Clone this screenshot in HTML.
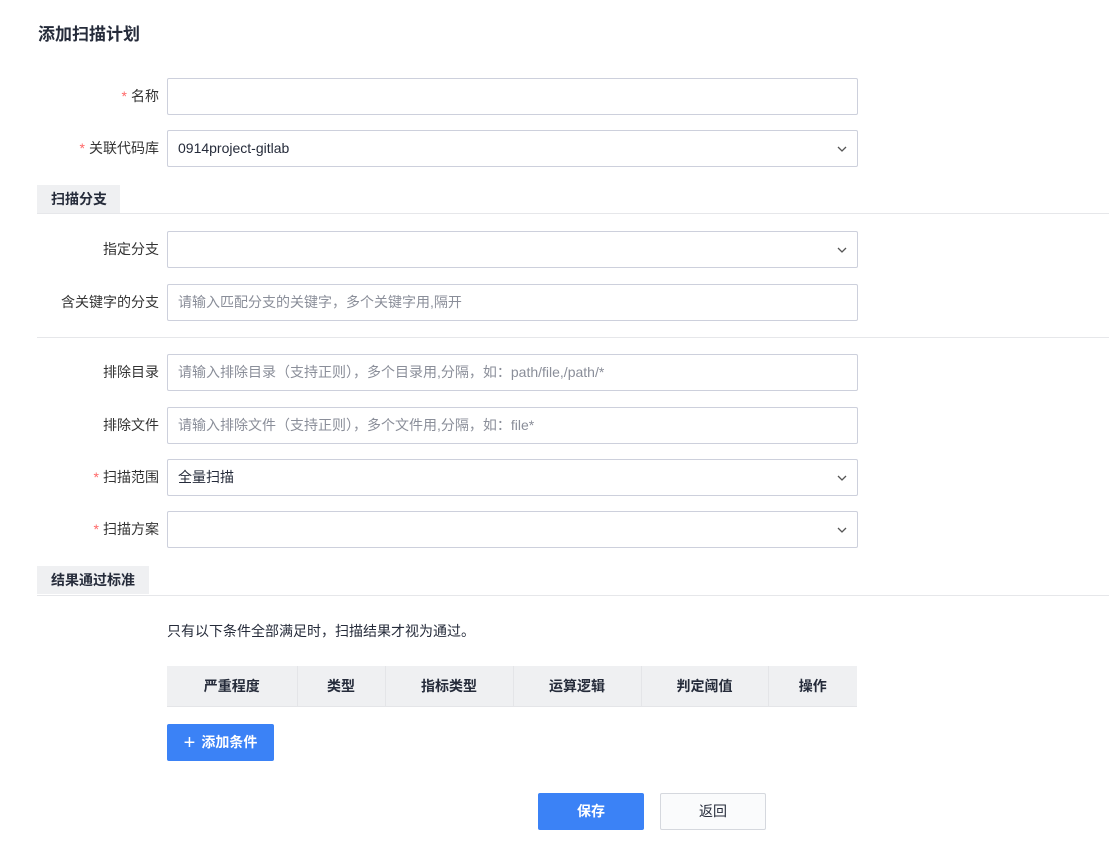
<!DOCTYPE html>
<html><head><meta charset="utf-8"><style>
*{box-sizing:border-box;margin:0;padding:0}
body{width:1109px;height:854px;background:#fff;font-family:"Liberation Sans","Noto Sans CJK SC",sans-serif;font-size:14px;color:#333;position:relative;overflow:hidden}
.abs{position:absolute}
.title{left:38px;top:20px;font-size:17px;font-weight:bold;color:#252b3a}
.lbl{position:absolute;width:159px;text-align:right;font-size:14px;color:#333;line-height:36px}
.lbl .s{color:#f66;margin-right:4px}
.inp{position:absolute;left:167px;width:691px;height:37px;border:1px solid #cdd0dc;border-radius:2px;line-height:35px;padding-left:10px;color:#252b3a}
.ph{color:#8a8e99}
.arr{position:absolute;right:10px;top:14px}
.sec{position:absolute;left:37px;width:83px;height:28px;background:#eff0f2;font-weight:bold;font-size:14px;line-height:28px;padding-left:14px;color:#252b3a}
.line{position:absolute;left:37px;right:0;height:1px;background:#e6e7ea}
table{position:absolute;left:167px;top:666px;width:690px;height:41px;border-collapse:collapse;background:#eff0f2}
th{font-weight:bold;font-size:14px;color:#252b3a;border-right:1px solid #e4e5e8;border-bottom:1px solid #e4e5e8}
.btn{position:absolute;border-radius:2px;text-align:center;font-size:14px;line-height:36px;height:37px}
</style></head><body>
<div class="abs title">添加扫描计划</div>

<div class="lbl" style="top:78px"><span class="s">*</span>名称</div>
<div class="inp" style="top:78px"></div>
<div class="lbl" style="top:130px"><span class="s">*</span>关联代码库</div>
<div class="inp" style="top:130px">0914project-gitlab<svg class="arr" width="10" height="8" viewBox="0 0 10 8"><path d="M1 2l4 4 4-4" stroke="#555" fill="none" stroke-width="1.3"/></svg></div>

<div class="sec" style="top:185px">扫描分支</div>
<div class="line" style="top:213px"></div>

<div class="lbl" style="top:231px">指定分支</div>
<div class="inp" style="top:231px"><svg class="arr" width="10" height="8" viewBox="0 0 10 8"><path d="M1 2l4 4 4-4" stroke="#555" fill="none" stroke-width="1.3"/></svg></div>
<div class="lbl" style="top:284px">含关键字的分支</div>
<div class="inp ph" style="top:284px">请输入匹配分支的关键字，多个关键字用,隔开</div>

<div class="line" style="top:337px"></div>

<div class="lbl" style="top:354px">排除目录</div>
<div class="inp ph" style="top:354px">请输入排除目录（支持正则），多个目录用,分隔，如：path/file,/path/*</div>
<div class="lbl" style="top:407px">排除文件</div>
<div class="inp ph" style="top:407px">请输入排除文件（支持正则），多个文件用,分隔，如：file*</div>
<div class="lbl" style="top:459px"><span class="s">*</span>扫描范围</div>
<div class="inp" style="top:459px">全量扫描<svg class="arr" width="10" height="8" viewBox="0 0 10 8"><path d="M1 2l4 4 4-4" stroke="#555" fill="none" stroke-width="1.3"/></svg></div>
<div class="lbl" style="top:511px"><span class="s">*</span>扫描方案</div>
<div class="inp" style="top:511px"><svg class="arr" width="10" height="8" viewBox="0 0 10 8"><path d="M1 2l4 4 4-4" stroke="#555" fill="none" stroke-width="1.3"/></svg></div>

<div class="sec" style="top:566px;width:112px">结果通过标准</div>
<div class="line" style="top:595px"></div>

<div class="abs" style="left:167px;top:621px;color:#252b3a">只有以下条件全部满足时，扫描结果才视为通过。</div>

<table><tr>
<th style="width:130px">严重程度</th><th style="width:88px">类型</th><th style="width:128px">指标类型</th><th style="width:128px">运算逻辑</th><th style="width:127px">判定阈值</th><th style="border-right:none">操作</th>
</tr></table>

<div class="btn" style="left:167px;top:724px;width:107px;background:#3b82f6;color:#fff;font-weight:bold"><span style="font-size:20px;font-weight:normal;vertical-align:-2px;margin-right:6px">+</span>添加条件</div>

<div class="btn" style="left:538px;top:793px;width:106px;background:#3b82f6;color:#fff;font-weight:bold">保存</div>
<div class="btn" style="left:660px;top:793px;width:106px;background:#fafbfc;border:1px solid #d5d8de;color:#252b3a;line-height:35px">返回</div>
</body></html>
